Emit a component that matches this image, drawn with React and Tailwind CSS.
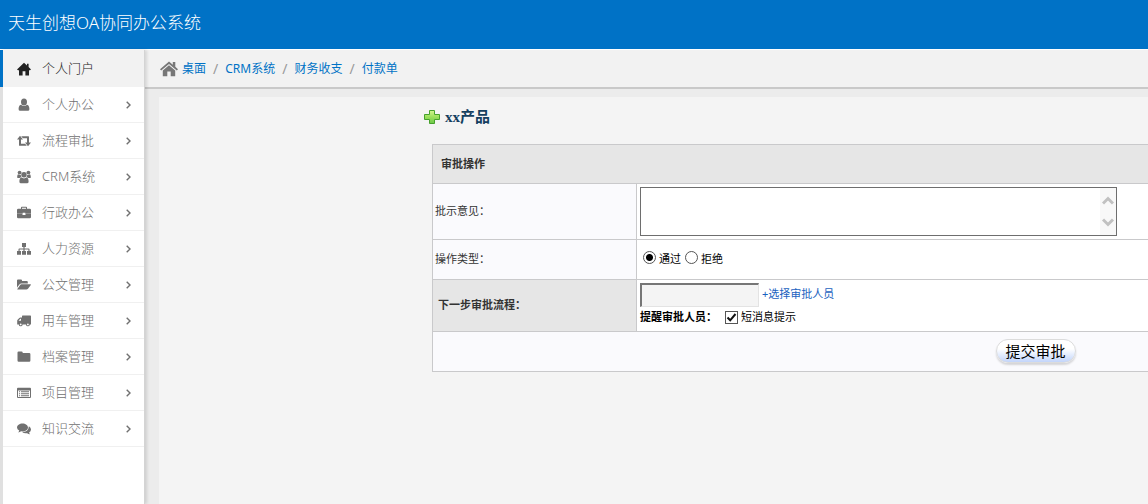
import React from "react";

const glyphs = {
  home: <path d="M7 0.8 0 7.4 1 8.3H2V13.4H5.6V9.3H8.4V13.4H12V8.3H13L14 7.4 11.6 5.1V1.8H10V3.6Z" />,
  user: (
    <>
      <ellipse cx="7" cy="3.9" rx="3" ry="3.5" />
      <path d="M4 6.8Q7 9.2 10 6.8C12 7.3 12.4 9.2 12.4 11.2Q12.4 12.8 10.9 12.8H3.1Q1.6 12.8 1.6 11.2C1.6 9.2 2 7.3 4 6.8Z" />
    </>
  ),
  retweet: (
    <>
      <path d="M3 1.8 6 5.4H4V9.7H8.1L9.8 11.8H2.6Q2 11.8 2 11.2V5.4H0Z" />
      <path d="M11 12.2 8 8.6H10V4.3H5.9L4.2 2.2H11.4Q12 2.2 12 2.8V8.6H14Z" />
    </>
  ),
  users: (
    <>
      <circle cx="2.6" cy="2.6" r="1.9" />
      <circle cx="11.4" cy="2.6" r="1.9" />
      <circle cx="7" cy="4.8" r="2.7" />
      <path d="M0.2 7.2C0.2 5.6 0.5 4.5 1.3 4.3Q2.5 5.2 3.8 4.7Q3.8 6.2 4.6 7.2Q3.3 7.3 2.6 8.1H1.2Q0.2 8.1 0.2 7.2ZM13.8 7.2C13.8 5.6 13.5 4.5 12.7 4.3Q11.5 5.2 10.2 4.7Q10.2 6.2 9.4 7.2Q10.7 7.3 11.4 8.1H12.8Q13.8 8.1 13.8 7.2Z" />
      <path d="M4.4 7.6Q7 9.2 9.6 7.6C11.3 8 11.6 9.8 11.6 11.7Q11.6 13.3 10 13.3H4Q2.4 13.3 2.4 11.7C2.4 9.8 2.7 8 4.4 7.6Z" />
    </>
  ),
  briefcase: (
    <>
      <path fillRule="evenodd" d="M4 2.8V1.6Q4 0.8 4.8 0.8H9.2Q10 0.8 10 1.6V2.8H12.8Q14 2.8 14 4V7.6H8.3V6.7H5.7V7.6H0V4Q0 2.8 1.2 2.8ZM5 2.8H9V1.8H5Z" />
      <path d="M0 7.4H5.5V9H8.5V7.4H14V11Q14 12.2 12.8 12.2H1.2Q0 12.2 0 11Z" />
    </>
  ),
  sitemap: <path d="M5 1H9V5H7.6V6.4H11.6Q12.5 6.4 12.5 7.3V9H14V12.8H10V9H11.4V7.5H7.6V9H9V12.8H5V9H6.4V7.5H2.6V9H4V12.8H0V9H1.5V7.3Q1.5 6.4 2.4 6.4H6.4V5H5Z" />,
  folderOpen: (
    <>
      <path d="M0 11V2.6Q0 1.6 1 1.6H4Q5 1.6 5 2.6V3.1H9.8Q10.8 3.1 10.8 4.1V5.4H4.4Q3.2 5.4 2.4 6.4L0.2 9.3Z" />
      <path d="M4.4 6.3H13.4Q14.3 6.3 13.8 7.1L11.2 10.6Q10.4 11.6 9.3 11.6H0.8Q-0.1 11.6 0.4 10.9L3 7.2Q3.6 6.3 4.4 6.3Z" />
    </>
  ),
  truck: (
    <path fillRule="evenodd" d="M5 2.2Q5 1.6 5.6 1.6H13.4Q14 1.6 14 2.2V10.4H12.8A1.9 1.9 0 1 1 9 10.4H5.6A1.9 1.9 0 1 1 1.8 10.4H0.2V6.7Q0.2 6.2 0.6 5.8L2.3 4Q2.7 3.6 3.3 3.6H5ZM1.5 6.7H4V4.7H3.3ZM3.7 9.5A0.9 0.9 0 1 0 3.7 11.3 0.9 0.9 0 1 0 3.7 9.5ZM10.9 9.5A0.9 0.9 0 1 0 10.9 11.3 0.9 0.9 0 1 0 10.9 9.5Z" />
  ),
  folder: <path d="M0.5 2.6Q0.5 1.4 1.7 1.4H4.5Q5.7 1.4 5.7 2.6V3H12.2Q13.4 3 13.4 4.2V10.6Q13.4 11.8 12.2 11.8H1.7Q0.5 11.8 0.5 10.6Z" />,
  list: (
    <path fillRule="evenodd" d="M1 1.8H13Q14 1.8 14 2.8V11Q14 12 13 12H1Q0 12 0 11V2.8Q0 1.8 1 1.8ZM1 4.5V11H13V4.5ZM2 5.2H3.1V6.2H2ZM4 5.2H12V6.2H4ZM2 7.2H3.1V8.2H2ZM4 7.2H12V8.2H4ZM2 9.2H3.1V10.2H2ZM4 9.2H12V10.2H4Z" />
  ),
  comments: (
    <>
      <path d="M5.5 1.4C8.5 1.4 11 3.1 11 5.4S8.5 9.4 5.5 9.4Q4.8 9.4 4.1 9.3Q2.8 10.3 1.2 10.4Q2 9.6 2.2 8.6Q0 7.4 0 5.4C0 3.1 2.5 1.4 5.5 1.4Z" />
      <path d="M11.9 4.3Q14 5.6 14 7.4Q14 9.3 12.1 10.5Q12.3 11.5 13.1 12.3Q11.4 12.2 10.1 11.2Q7.2 11.7 5.2 10.3Q11.4 10.2 11.9 4.3Z" />
    </>
  ),
};

function Glyph({ name }) {
  return (
    <svg viewBox="0 0 14 14" className="size-3.5 shrink-0" fill="currentColor" aria-hidden="true">
      {glyphs[name]}
    </svg>
  );
}

const menu = [
  { label: "个人门户", icon: "home", active: true },
  { label: "个人办公", icon: "user" },
  { label: "流程审批", icon: "retweet" },
  { label: "CRM系统", icon: "users" },
  { label: "行政办公", icon: "briefcase" },
  { label: "人力资源", icon: "sitemap" },
  { label: "公文管理", icon: "folderOpen" },
  { label: "用车管理", icon: "truck" },
  { label: "档案管理", icon: "folder" },
  { label: "项目管理", icon: "list" },
  { label: "知识交流", icon: "comments" },
];

const crumbs = ["桌面", "CRM系统", "财务收支", "付款单"];

function Sidebar() {
  return (
    <aside className="z-10 w-[145px] shrink-0 border-r border-[#d4d4d4] bg-[#e0e0e0] shadow-[2px_0_3px_rgba(0,0,0,0.12)]">
      <nav className="h-full bg-white bg-clip-content pl-[3px]">
        <ul>
          {menu.map(({ label, icon, active }) => (
            <li key={label}>
              <a
                href="#"
                className={
                  active
                    ? "-ml-[3px] flex h-[37px] items-center border-l-[3px] border-[#0072c6] bg-[#f2f2f2] pl-3.5 text-[#222]"
                    : "flex h-9 items-center border-b border-[#f0f0f0] pl-3.5 text-[#707070]"
                }
              >
                <Glyph name={icon} />
                <span className="ml-[11px] flex-1 text-[13px] font-light">{label}</span>
                {!active && (
                  <svg viewBox="0 0 5 8" className="mr-[13px] h-2 w-[5px]" fill="none" stroke="currentColor" strokeWidth="1.4">
                    <path d="M0.7 0.8 4 4 0.7 7.2" />
                  </svg>
                )}
              </a>
            </li>
          ))}
        </ul>
      </nav>
    </aside>
  );
}

function Breadcrumbs() {
  return (
    <nav className="flex h-[39px] items-center border-b-2 border-[#c9c9c9] bg-[#f2f2f2] pl-[15px] text-xs">
      <HouseIcon />
      {crumbs.map((c, i) => (
        <React.Fragment key={c}>
          {i > 0 && <span className="mx-[7px] text-sm text-[#999]">/</span>}
          <a href="#" className="text-[#0072c6]">{c}</a>
        </React.Fragment>
      ))}
    </nav>
  );
}

function HouseIcon() {
  return (
    <svg viewBox="0 0 18 16" className="mr-1 h-4 w-[18px]" fill="#777">
      <path d="M9 0.4 0 8.2 1.2 9.6 9 2.9 16.8 9.6 18 8.2 15.3 5.8V0.9H12.8V3.7Z" />
      <path d="M9 4.2 2.8 9.5V15.2H7.3V10.6H10.7V15.2H15.2V9.5Z" />
    </svg>
  );
}

function PlusIcon() {
  return (
    <svg viewBox="0 0 16 16" className="size-4">
      <defs>
        <linearGradient id="plus" x1="0" y1="0" x2="0" y2="1">
          <stop offset="0" stopColor="#d3f58f" />
          <stop offset="0.5" stopColor="#9be05a" />
          <stop offset="1" stopColor="#6cc84a" />
        </linearGradient>
      </defs>
      <path d="M5.5 1.5h5v4h5v5h-5v4h-5v-4h-5v-5h5z" fill="url(#plus)" stroke="#46a12c" />
    </svg>
  );
}

const choice = "appearance-none border border-[#555] bg-white";

function ApprovalForm() {
  const [type, setType] = React.useState("pass");
  const [remind, setRemind] = React.useState(true);
  return (
    <table className="mt-4 ml-[273px] w-[1207px] table-fixed border-collapse text-[11px] text-[#333] [&_td]:border [&_td]:border-[#c9c9cb] [&_th]:border [&_th]:border-[#c9c9cb]">
      <colgroup>
        <col className="w-[204px]" />
        <col />
      </colgroup>
      <tbody>
        <tr className="h-[39px]">
          <th colSpan={2} className="bg-[#e6e6e6] px-2 text-left">审批操作</th>
        </tr>
        <tr className="h-14">
          <td className="bg-[#fafafd] px-0.5"><label htmlFor="opinion">批示意见：</label></td>
          <td className="bg-white px-[3px]">
            <div className="flex h-[49px] w-[477px] border border-[#6e6e6e]">
              <textarea id="opinion" className="min-w-0 flex-1 resize-none overflow-hidden outline-none" />
              <div className="flex w-4 flex-col items-center justify-between bg-[#f8f8f8] py-2">
                <svg viewBox="0 0 12 9" className="h-[9px] w-3" fill="none" stroke="#c1c1c1" strokeWidth="3"><path d="M1 7.5 6 2.5 11 7.5" /></svg>
                <svg viewBox="0 0 12 9" className="h-[9px] w-3" fill="none" stroke="#c1c1c1" strokeWidth="3"><path d="M1 1.5 6 6.5 11 1.5" /></svg>
              </div>
            </div>
          </td>
        </tr>
        <tr className="h-10">
          <td className="bg-[#fafafd] px-0.5">操作类型：</td>
          <td className="bg-white px-[3px]">
            <div className="flex items-start text-black">
              <input id="pass" type="radio" name="type" checked={type === "pass"} onChange={() => setType("pass")} className={choice + " mx-[3px] size-[13px] rounded-full checked:bg-[radial-gradient(circle,#000_0_3px,#fff_4px)]"} />
              <label htmlFor="pass">通过</label>
              <input id="reject" type="radio" name="type" checked={type === "reject"} onChange={() => setType("reject")} className={choice + " mr-[3px] ml-1 size-[13px] rounded-full checked:bg-[radial-gradient(circle,#000_0_3px,#fff_4px)]"} />
              <label htmlFor="reject">拒绝</label>
            </div>
          </td>
        </tr>
        <tr className="h-[52px]">
          <th className="bg-[#e6e6e6] px-[5px] text-left"><label htmlFor="next">下一步审批流程：</label></th>
          <td className="bg-white px-[3px]">
            <div className="flex items-center">
              <input id="next" type="text" readOnly className="h-6 w-[119px] border border-t-2 border-l-2 border-[#e3e3e3] border-t-[#767676] border-l-[#767676] bg-[#f4f4f4] px-1" />
              <a href="#" className="ml-[3px] text-[#1a62c0]">+选择审批人员</a>
            </div>
            <div className="flex h-[22px] items-center text-black">
              <b>提醒审批人员：</b>
              <span className="relative mr-[3px] ml-2 flex size-[13px]">
                <input id="remind" type="checkbox" checked={remind} onChange={(e) => setRemind(e.target.checked)} className={choice + " size-[13px]"} />
                {remind && (
                  <svg viewBox="0 0 13 13" className="pointer-events-none absolute inset-0" fill="none" stroke="#111" strokeWidth="2"><path d="M2.5 6.5 5.2 9.3 10.5 3" /></svg>
                )}
              </span>
              <label htmlFor="remind">短消息提示</label>
            </div>
          </td>
        </tr>
        <tr className="h-10">
          <td colSpan={2} className="bg-[#fafafd] pb-0.5 text-center">
            <button type="button" className="h-6 w-20 rounded-full border border-[#dcdcdc] bg-linear-to-b from-white from-40% to-[#c3d5fb] align-middle text-[15px] leading-5 text-black shadow-[0_2px_2px_rgba(0,0,0,0.15)]">提交审批</button>
          </td>
        </tr>
      </tbody>
    </table>
  );
}

export default function App() {
  return (
    <div className="flex h-screen flex-col overflow-hidden bg-[#ececec] font-['Noto_Sans','Noto_Sans_CJK_SC',sans-serif]">
      <header className="flex h-[50px] shrink-0 items-start border-b border-white bg-[#0072c6] px-2 pt-[11px]">
        <h1 className="text-[17px] leading-6 font-light text-white">天生创想OA协同办公系统</h1>
      </header>
      <div className="flex min-h-0 flex-1">
        <Sidebar />
        <div className="flex min-w-0 flex-1 flex-col">
          <Breadcrumbs />
          <main className="mt-2 ml-3.5 flex-1 overflow-hidden bg-[#f4f4f4] pt-[9px]">
            <h2 className="ml-[265px] flex items-center gap-[5px] font-['Liberation_Serif','Noto_Sans_CJK_SC',serif] text-[15px] leading-[22px] font-bold text-[#14405f]">
              <PlusIcon />
              <span>xx产品</span>
            </h2>
            <ApprovalForm />
          </main>
        </div>
      </div>
    </div>
  );
}
